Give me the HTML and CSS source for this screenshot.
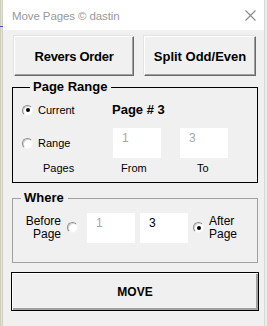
FILE: index.html
```html
<!DOCTYPE html>
<html>
<head>
<meta charset="utf-8">
<link rel="stylesheet" href="styles.css">
</head>
<body>
<div class="screen">
  <div class="strip-left"></div>
  <div class="window">
    <div class="titlebar">
      <span class="title">Move Pages © dastin</span>
      <svg class="close" width="11" height="11" viewBox="0 0 11 11"><path d="M0.5 0.5 L10.5 10.5 M10.5 0.5 L0.5 10.5" stroke="#8a8a8a" stroke-width="1.1" fill="none"/></svg>
    </div>
    <div class="content">
      <div class="top-buttons">
        <button class="btn btn-revers">Revers Order</button>
        <button class="btn btn-split">Split Odd/Even</button>
      </div>
      <fieldset class="group group-range">
        <legend>Page Range</legend>
        <div class="range-grid">
          <label class="opt"><span class="radio checked"></span>Current</label>
          <div class="page-no">Page # 3</div>
          <label class="opt opt-range"><span class="radio"></span>Range</label>
          <div class="field disabled">1</div>
          <div class="field disabled">3</div>
          <div class="cap cap-pages">Pages</div>
          <div class="cap cap-from">From</div>
          <div class="cap cap-to">To</div>
        </div>
      </fieldset>
      <fieldset class="group group-where">
        <legend>Where</legend>
        <div class="where-row">
          <div class="where-label before">Before<br>Page</div>
          <span class="radio"></span>
          <div class="field disabled">1</div>
          <div class="field">3</div>
          <span class="radio checked"></span>
          <div class="where-label after">After<br>Page</div>
        </div>
      </fieldset>
      <button class="btn-move">MOVE</button>
    </div>
  </div>
  <div class="strip-right"></div>
</div>
</body>
</html>
```
FILE: styles.css
```css
* { box-sizing: border-box; }
html, body { margin: 0; padding: 0; }
body {
  width: 267px;
  height: 326px;
  overflow: hidden;
  background: #f0f0f0;
  font-family: "Liberation Sans", Arial, sans-serif;
  color: #000;
}
.screen {
  display: flex;
  width: 267px;
  height: 326px;
}
.strip-left {
  width: 3px;
  background:
    linear-gradient(to bottom, transparent 26px, #3a5a9a 26px, #3a5a9a 27px, transparent 27px),
    linear-gradient(to right, #cfcfbf 0 1px, #e2e2d6 1px 2px, #d2d2c4 2px);
}
.strip-right {
  width: 3px;
  background: linear-gradient(to right, #d8d8d8 0 1px, #ececec 1px);
}
.window {
  flex: 1;
  background: #f0f0f0;
  display: flex;
  flex-direction: column;
}
.titlebar {
  height: 30px;
  background: #fff;
  display: flex;
  align-items: center;
  justify-content: space-between;
  padding: 0 8px 0 9px;
}
.title {
  font-size: 11.5px;
  color: #999;
  letter-spacing: -0.1px;
  margin-top: 1px;
}
.close { display: block; margin-top: 1px; }
.content {
  width: 248px;
  margin-left: 8px;
  padding-top: 6px;
}
.top-buttons {
  display: flex;
  gap: 10px;
  margin: 0 3px;
}
.btn {
  height: 40px;
  background: #f0f0f0;
  border: 1px solid;
  border-color: #fff #696969 #696969 #fff;
  box-shadow: inset -1px -1px 0 #a0a0a0, -1px -1px 0 #e3e3e3;
  font-family: "Liberation Sans", Arial, sans-serif;
  font-weight: bold;
  font-size: 13px;
  color: #000;
  padding: 0;
}
.btn-revers { width: 120px; letter-spacing: -0.3px; }
.btn-split { width: 112px; }
.group {
  margin: 3px 1px 0;
  padding: 0;
  min-width: 0;
}
.group legend {
  font-weight: bold;
  font-size: 13px;
  line-height: 16px;
  padding: 0 4px 0 3px;
  margin-left: 8px;
}
.group-range {
  border: 1px solid #000;
  padding: 5px 0 7px 9px;
}
.range-grid {
  display: grid;
  grid-template-columns: 72px 48px 48px;
  grid-template-rows: 20px 38px 17px;
  column-gap: 19px;
  row-gap: 0;
}
.opt {
  display: flex;
  align-items: center;
  gap: 5px;
  font-size: 11px;
  line-height: 13px;
  align-self: center;
}
.page-no {
  grid-column: 2 / 4;
  font-weight: bold;
  font-size: 13px;
  line-height: 16px;
  margin-left: -1px;
  align-self: center;
}
.opt-range { align-self: end; margin-bottom: 8px; }
.range-grid .field { align-self: end; }
.cap {
  font-size: 11px;
  line-height: 14px;
  align-self: end;
}
.cap-pages { padding-left: 21px; }
.cap-from { padding-left: 8px; }
.cap-to { padding-left: 17px; }
.radio {
  position: relative;
  flex: none;
  width: 11px;
  height: 11px;
  border-radius: 50%;
  background: #fff;
  border: 1px solid;
  border-color: #8c8c8c #f4f4f4 #f4f4f4 #8c8c8c;
  box-shadow: inset 1px 1px 0 #d8d8d8;
}
.radio.checked::after {
  content: "";
  position: absolute;
  left: 2.5px;
  top: 2.5px;
  width: 4px;
  height: 4px;
  border-radius: 50%;
  background: #000;
}
.field {
  width: 48px;
  height: 30px;
  background: #fff;
  font-size: 12px;
  line-height: 14px;
  padding: 3px 0 0 9px;
  color: #000;
}
.field.disabled { color: #a6a6a6; }
.group-where {
  border: 1px solid #a0a0a0;
  margin-top: 7px;
  padding: 7px 0 19px 0;
}
.where-row {
  display: flex;
  align-items: center;
}
.where-label {
  font-size: 12px;
  line-height: 13.5px;
}
.where-label.before {
  width: 48px;
  text-align: right;
  margin-right: 6px;
}
.where-row > .radio:nth-child(2) { margin-right: 9px; margin-top: -1px; }
.where-row > .field:nth-child(4) { margin-left: 5px; }
.where-row > .radio:nth-child(5) { margin-left: 5px; margin-right: 5px; margin-top: -1px; }
.btn-move {
  display: block;
  width: 248px;
  height: 39px;
  margin-top: 9px;
  background: #f0f0f0;
  border: 1px solid #000;
  box-shadow: inset 1px 1px 0 #fff, inset -2px -2px 0 #a0a0a0;
  font-family: "Liberation Sans", Arial, sans-serif;
  font-weight: bold;
  font-size: 12px;
  color: #000;
  padding: 0;
}
```
